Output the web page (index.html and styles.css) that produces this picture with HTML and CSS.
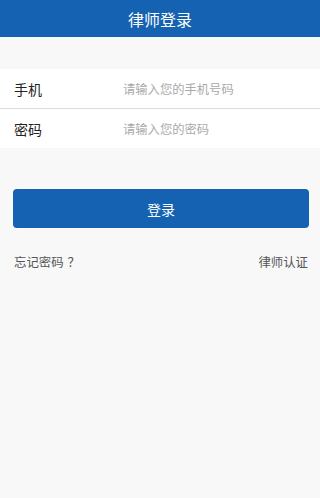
FILE: index.html
```html
<!DOCTYPE html>
<html lang="zh">
<head>
<meta charset="utf-8">
<link rel="stylesheet" href="styles.css">
</head>
<body>
<header class="topbar">律师登录</header>
<div class="spacer"></div>
<div class="form">
  <div class="row"><span class="label">手机</span><span class="ph">请输入您的手机号码</span></div>
  <div class="row"><span class="label">密码</span><span class="ph">请输入您的密码</span></div>
</div>
<div class="actions">
  <div class="btn">登录</div>
  <div class="links"><span>忘记密码<span class="q">？</span></span><span>律师认证</span></div>
</div>
</body>
</html>
```
FILE: styles.css
```css
html, body { margin: 0; padding: 0; }
body {
  width: 320px; height: 498px; overflow: hidden;
  background: #f8f8f8;
  font-family: "Noto Sans CJK SC", "Noto Sans", sans-serif;
}
.topbar {
  height: 37px; background: #1462b1; color: #fff;
  font-size: 16px; display: flex; align-items: center; justify-content: center;
}
.spacer { height: 32px; }
.form { background: #fff; }
.row {
  height: 39px; display: flex; align-items: center; padding-left: 14px;
}
.row + .row { border-top: 1px solid #dcdcdc; }
.label { width: 109px; font-size: 14px; color: #222; }
.ph { font-size: 12.3px; color: #aaa; }
.actions { padding: 41px 11px 0 13px; }
.btn {
  height: 39px; border-radius: 4px; background: #1462b1; color: #fff;
  font-size: 14px; display: flex; align-items: center; justify-content: center;
}
.links {
  display: flex; justify-content: space-between; margin-top: 25px;
  font-size: 12.4px; color: #555; padding-left: 1px; padding-right: 1px;
}
.q { padding-left: 4px; }
```
